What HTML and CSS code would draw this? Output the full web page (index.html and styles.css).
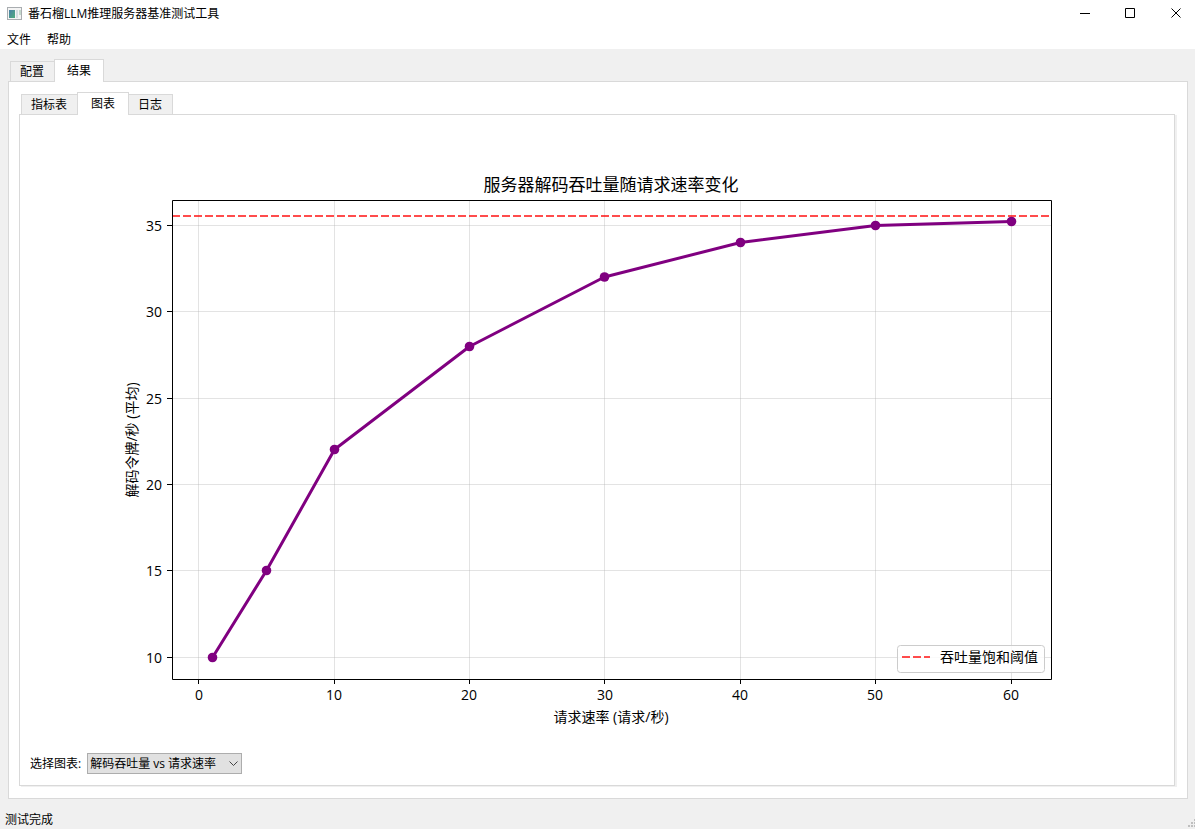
FILE: index.html
```html
<!DOCTYPE html>
<html lang="zh-CN">
<head>
  <meta charset="UTF-8">
  <meta name="viewport" content="width=device-width, initial-scale=1.0">
  <title>番石榴LLM推理服务器基准测试工具</title>
  <link rel="stylesheet" href="styles.css">
</head>
<body>
  <header class="titlebar">
    <svg class="app-icon" width="16" height="14" viewBox="0 0 16 14">
      <defs>
        <linearGradient id="iconFill" x1="0" y1="0" x2="1" y2="1">
          <stop offset="0" stop-color="#4a7fa8"/>
          <stop offset="1" stop-color="#4fae7c"/>
        </linearGradient>
      </defs>
      <rect x="0.5" y="0.5" width="14" height="12" fill="#f4f4f4" stroke="#a9adb0"/>
      <rect x="2" y="3" width="6" height="8" fill="url(#iconFill)"/>
      <rect x="9" y="3" width="2" height="8" fill="#d5dde2"/>
      <rect x="12" y="3" width="2" height="5" fill="#c3d8cc"/>
    </svg>
    <h1 class="title">番石榴LLM推理服务器基准测试工具</h1>
    <div class="window-buttons">
      <button type="button" aria-label="最小化">
        <svg width="11" height="11"><path d="M1 5.5H11"/></svg>
      </button>
      <button type="button" aria-label="最大化">
        <svg width="11" height="11"><path d="M0.5 0.5H9.5V9.5H0.5Z"/></svg>
      </button>
      <button type="button" aria-label="关闭">
        <svg width="11" height="11"><path d="M0.5 0.5L9.5 9.5M9.5 0.5L0.5 9.5"/></svg>
      </button>
    </div>
  </header>

  <nav class="menubar">
    <button type="button">文件</button>
    <button type="button">帮助</button>
  </nav>

  <main class="content">
    <div class="tabs" role="tablist">
      <button type="button" class="tab" role="tab" aria-selected="false">配置</button>
      <button type="button" class="tab active" role="tab" aria-selected="true">结果</button>
    </div>
    <section class="pane">
      <div class="tabs" role="tablist">
        <button type="button" class="tab" role="tab" aria-selected="false">指标表</button>
        <button type="button" class="tab active" role="tab" aria-selected="true">图表</button>
        <button type="button" class="tab" role="tab" aria-selected="false">日志</button>
      </div>
      <section class="pane inner-pane">
        <svg class="chart" viewBox="0 0 1154 630" role="img" aria-label="服务器解码吞吐量随请求速率变化">
          <path class="grid" d="M178.5 85V564M314.5 85V564M449.5 85V564M584.5 85V564M720.5 85V564M855.5 85V564M991.5 85V564
            M152 110.5H1031M152 196.5H1031M152 283.5H1031M152 369.5H1031M152 455.5H1031M152 542.5H1031"/>
          <path class="threshold" d="M152 101H1031"/>
          <polyline class="series" points="192.5,542.5 246.5,455.5 314.5,334.5 449.5,231.5 584.5,162 720.5,127.5 855.5,110.5 991.5,106.5"/>
          <g class="points">
            <circle cx="192.5" cy="542.5" r="4.8"/>
            <circle cx="246.5" cy="455.5" r="4.8"/>
            <circle cx="314.5" cy="334.5" r="4.8"/>
            <circle cx="449.5" cy="231.5" r="4.8"/>
            <circle cx="584.5" cy="162" r="4.8"/>
            <circle cx="720.5" cy="127.5" r="4.8"/>
            <circle cx="855.5" cy="110.5" r="4.8"/>
            <circle cx="991.5" cy="106.5" r="4.8"/>
          </g>
          <path class="axis" d="M152.5 85.5H1031.5V564.5H152.5Z
            M178.5 565v4M314.5 565v4M449.5 565v4M584.5 565v4M720.5 565v4M855.5 565v4M991.5 565v4
            M152 110.5h-5M152 196.5h-5M152 283.5h-5M152 369.5h-5M152 455.5h-5M152 542.5h-5"/>
          <text class="chart-title" x="591" y="76">服务器解码吞吐量随请求速率变化</text>
          <g class="x-labels">
            <text x="179" y="585">0</text>
            <text x="314" y="585">10</text>
            <text x="449" y="585">20</text>
            <text x="585" y="585">30</text>
            <text x="720" y="585">40</text>
            <text x="855" y="585">50</text>
            <text x="991" y="585">60</text>
            <text x="591" y="607">请求速率 (请求/秒)</text>
          </g>
          <g class="y-labels">
            <text x="142" y="116">35</text>
            <text x="142" y="202">30</text>
            <text x="142" y="289">25</text>
            <text x="142" y="375">20</text>
            <text x="142" y="461">15</text>
            <text x="142" y="548">10</text>
          </g>
          <text class="y-title" transform="translate(117 325) rotate(-90)">解码令牌/秒 (平均)</text>
          <g>
            <rect class="legend-box" x="877.5" y="530.5" width="147" height="27" rx="3"/>
            <path class="threshold" d="M882 542H910"/>
            <text x="920" y="547">吞吐量饱和阈值</text>
          </g>
        </svg>
        <div class="chart-select">
          <label for="chartType">选择图表:</label>
          <div class="select-box">
            <select id="chartType">
              <option>解码吞吐量 vs 请求速率</option>
            </select>
            <svg class="arrow" width="9" height="6"><path d="M0.5 0.5L4.5 4.5L8.5 0.5"/></svg>
          </div>
        </div>
      </section>
    </section>
  </main>

  <footer class="statusbar">
    <span>测试完成</span>
    <svg class="grip" width="7" height="8">
      <path d="M6 0h2v2h-2zM3 3h2v2h-2zM6 3h2v2h-2zM0 6h2v2h-2zM3 6h2v2h-2zM6 6h2v2h-2z"/>
    </svg>
  </footer>
</body>
</html>
```
FILE: styles.css
```css
* {
  box-sizing: border-box;
}
body {
  margin: 0;
  height: 100vh;
  display: flex;
  flex-direction: column;
  background-color: #f0f0f0;
  color: black;
  font-family: "Open Sans", "Noto Sans CJK SC", sans-serif;
  font-size: 12px;
  line-height: 18px;
}
button,
select {
  font: inherit;
  color: inherit;
}
.titlebar {
  display: flex;
  align-items: center;
  height: 27px;
  padding: 0 13px 0 7px;
  background-color: white;
}
.title {
  margin: 0 0 0 5px;
  font-size: 12px;
  font-weight: normal;
}
.window-buttons {
  display: flex;
  gap: 35px;
  margin-left: auto;
}
.window-buttons button {
  display: flex;
  align-items: center;
  justify-content: center;
  width: 11px;
  height: 27px;
  padding: 0;
  border: none;
  background: none;
}
.window-buttons path {
  fill: none;
  stroke: black;
}
.menubar {
  display: flex;
  gap: 16px;
  height: 22px;
  padding: 4px 7px 0;
  background-color: white;
}
.menubar button {
  padding: 0;
  height: 18px;
  border: none;
  background: none;
}

/* tabs */
.content {
  flex: 1;
  min-height: 0;
  display: flex;
  flex-direction: column;
  padding: 10px 7px 0 8px;
}
.tabs {
  display: flex;
  align-items: flex-end;
  padding-left: 2px;
}
.tab {
  height: 20px;
  padding: 0 10px 0 9px;
  border: 1px solid #d9d9d9;
  border-bottom: none;
  background-color: #f0f0f0;
}
.tab + .tab {
  border-left: none;
}
.tab.active {
  position: relative;
  height: 23px;
  margin: 0 0 -1px -1px;
  padding: 0 13px 1px;
  background-color: white;
}
.tab + .tab.active {
  border-left: 1px solid #d9d9d9;
}
.tab.active:last-child {
  padding: 0 12px 1px;
}
.pane {
  flex: 1;
  min-height: 0;
  display: flex;
  flex-direction: column;
  padding: 10px 12px 12px 10px;
  border: 1px solid #d9d9d9;
  background-color: white;
}
.inner-pane {
  padding: 0;
  box-shadow: 2px 1px 0 #f0f0f0;
}

/* chart */
.chart {
  flex: 1;
  min-height: 0;
  width: 100%;
  font-size: 14px;
}
.grid {
  fill: none;
  stroke: #b0b0b0;
  stroke-opacity: 0.35;
}
.axis {
  fill: none;
  stroke: black;
}
.threshold {
  fill: none;
  stroke: red;
  stroke-opacity: 0.7;
  stroke-width: 2;
  stroke-dasharray: 8 3;
}
.series {
  fill: none;
  stroke: purple;
  stroke-width: 3;
  stroke-linejoin: round;
}
.points {
  fill: purple;
}
.chart-title {
  font-size: 17px;
  text-anchor: middle;
}
.x-labels,
.y-title {
  text-anchor: middle;
}
.y-labels {
  text-anchor: end;
}
.legend-box {
  fill: white;
  fill-opacity: 0.8;
  stroke: #cccccc;
}

.chart-select {
  display: flex;
  align-items: center;
  gap: 6px;
  padding: 8px 10px 11px;
}
.select-box {
  position: relative;
}
.select-box select {
  display: block;
  width: 155px;
  height: 21px;
  padding: 0 20px 0 2px;
  border: 1px solid #adadad;
  border-radius: 0;
  background-color: #e1e1e1;
  appearance: none;
}
.arrow {
  position: absolute;
  top: 8px;
  right: 4px;
  pointer-events: none;
}
.arrow path {
  fill: none;
  stroke: #444444;
}

.statusbar {
  display: flex;
  align-items: flex-end;
  justify-content: space-between;
  height: 30px;
  padding-left: 5px;
}
.grip {
  margin-bottom: 2px;
  fill: #bfbfbf;
}
```
